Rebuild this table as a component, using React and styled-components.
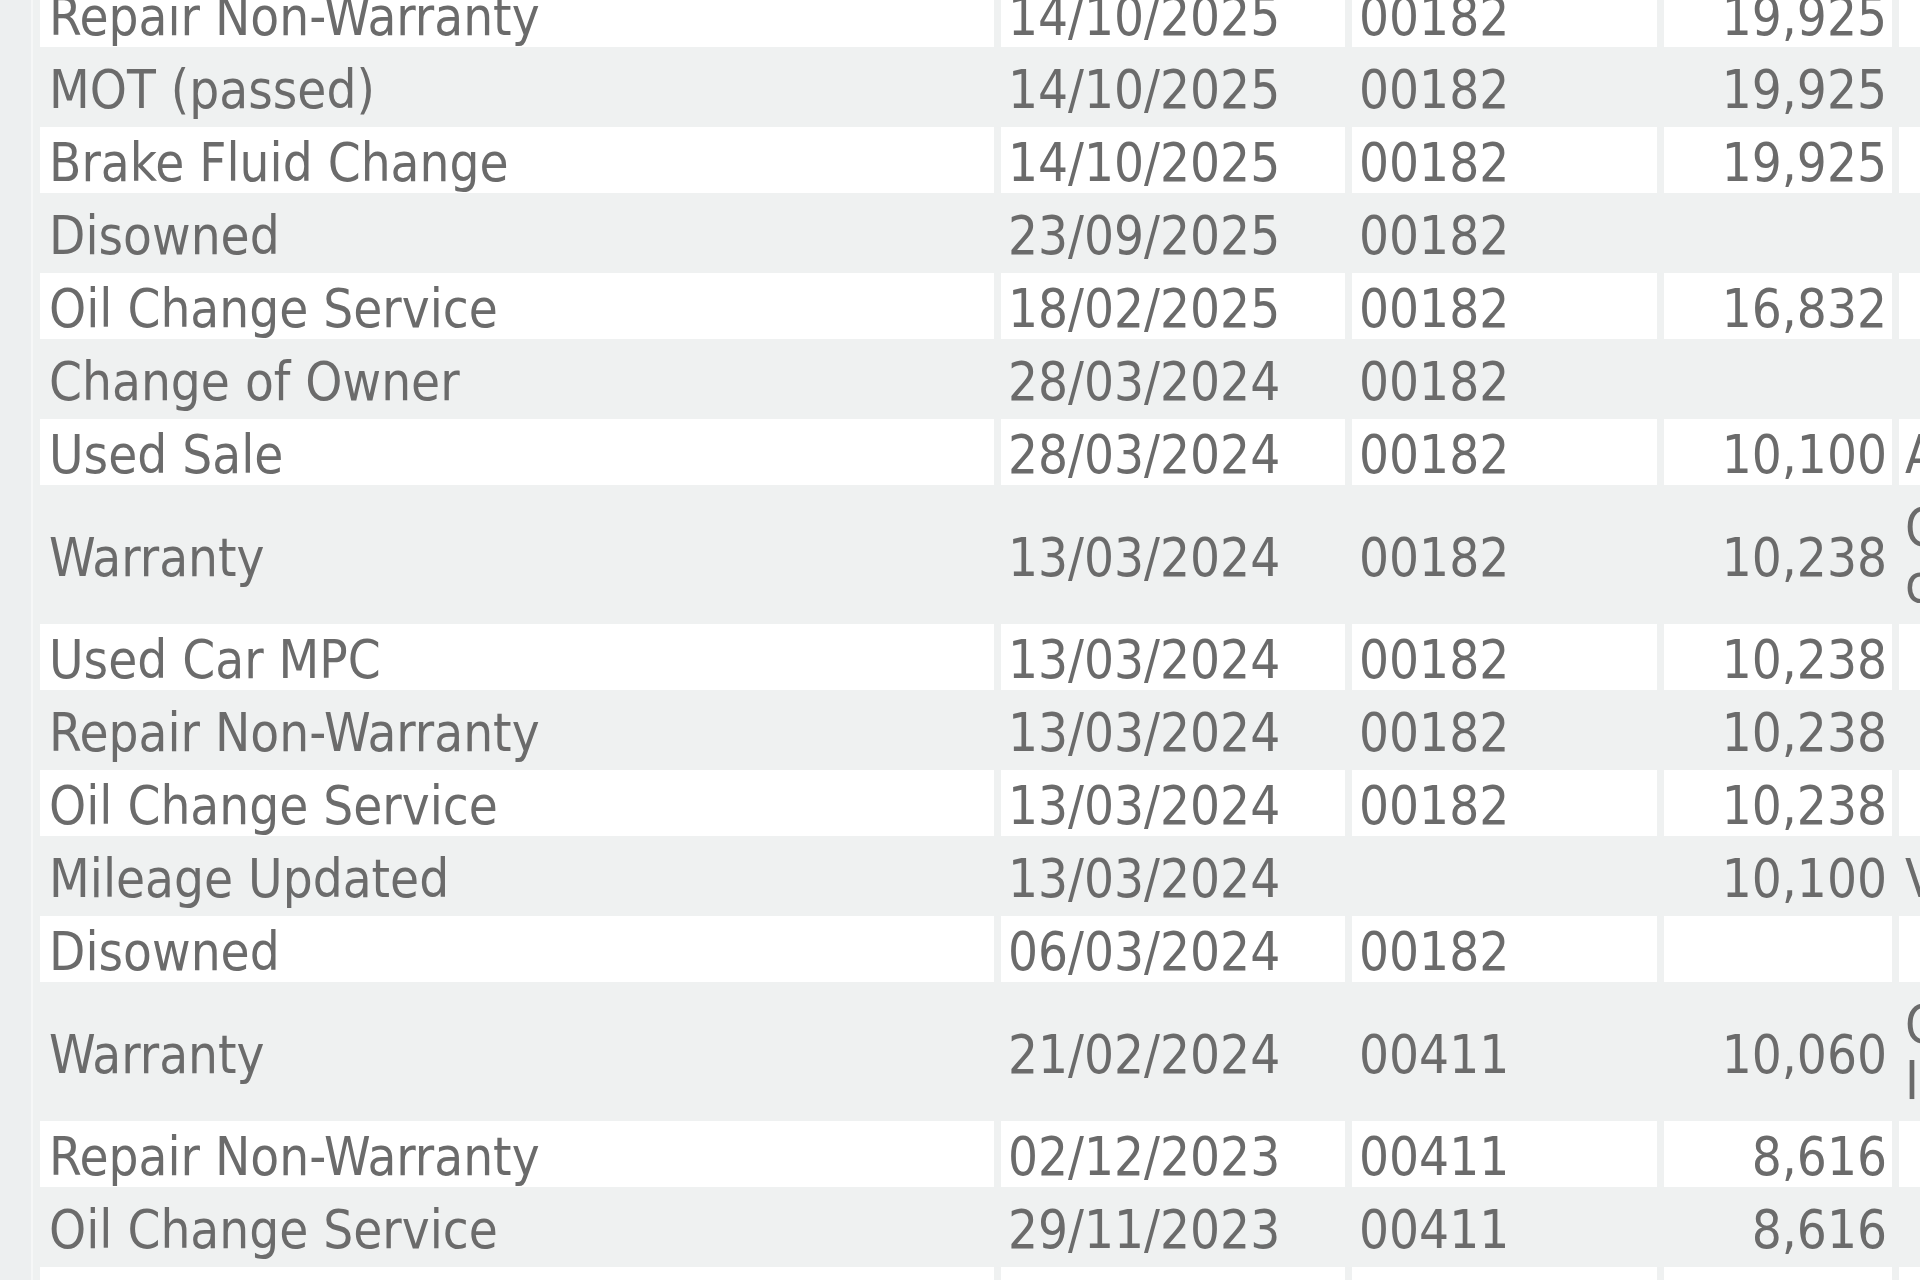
import styled, { createGlobalStyle } from "styled-components";

const GlobalStyle = createGlobalStyle`
  html, body {
    margin: 0;
    padding: 0;
    background: #eef0f0;
    overflow: hidden;
  }
`;

const Page = styled.div`
  width: 1920px;
  height: 1280px;
  overflow: hidden;
  display: flex;
`;

const Gutter = styled.div`
  width: 31px;
  flex: none;
  background: #edeff0;
  border-right: 2px solid #f6f7f7;
`;

const Panel = styled.div`
  margin-top: -26px;
  flex: none;
`;

const Table = styled.table`
  table-layout: fixed;
  width: 2373px;
  border-collapse: separate;
  border-spacing: 7px;
  background: #eff1f1;
  font-family: "DejaVu Sans Condensed", "DejaVu Sans", sans-serif;
  font-stretch: condensed;
  font-size: 52.5px;
  color: #6b6b6b;
`;

const Row = styled.tr`
  td {
    background: ${(p) => (p.$odd ? "#eff1f1" : "#ffffff")};
  }
`;

const Cell = styled.td`
  box-sizing: border-box;
  height: 66px;
  padding: 8px ${(p) => (p.$right ? "5px" : "7px")} 2px ${(p) => (p.$first ? "9px" : "7px")};
  line-height: 56px;
  vertical-align: middle;
  text-align: ${(p) => (p.$right ? "right" : "left")};
  white-space: nowrap;
  overflow: hidden;
`;

const Note = styled(Cell)`
  padding-left: 6px;
  padding-bottom: ${(p) => (p.$multi ? "5px" : "2px")};
`;

const rows = [
  ["Repair Non-Warranty", "14/10/2025", "00182", "19,925", ""],
  ["MOT (passed)", "14/10/2025", "00182", "19,925", ""],
  ["Brake Fluid Change", "14/10/2025", "00182", "19,925", ""],
  ["Disowned", "23/09/2025", "00182", "", ""],
  ["Oil Change Service", "18/02/2025", "00182", "16,832", ""],
  ["Change of Owner", "28/03/2024", "00182", "", ""],
  ["Used Sale", "28/03/2024", "00182", "10,100", "Advertised retail"],
  ["Warranty", "13/03/2024", "00182", "10,238", ["Customer states", "coolant light on"]],
  ["Used Car MPC", "13/03/2024", "00182", "10,238", ""],
  ["Repair Non-Warranty", "13/03/2024", "00182", "10,238", ""],
  ["Oil Change Service", "13/03/2024", "00182", "10,238", ""],
  ["Mileage Updated", "13/03/2024", "", "10,100", "Vehicle check"],
  ["Disowned", "06/03/2024", "00182", "", ""],
  ["Warranty", "21/02/2024", "00411", "10,060", ["Customer reports", "Intermittent fault"]],
  ["Repair Non-Warranty", "02/12/2023", "00411", "8,616", ""],
  ["Oil Change Service", "29/11/2023", "00411", "8,616", ""],
  ["MOT (passed)", "20/11/2023", "00411", "8,540", ""],
];

const App = () => {
  return (
    <>
      <GlobalStyle />
      <Page>
        <Gutter />
        <Panel>
          <Table>
            <colgroup>
              <col style={{ width: 954 }} />
              <col style={{ width: 344 }} />
              <col style={{ width: 305 }} />
              <col style={{ width: 228 }} />
              <col style={{ width: 500 }} />
            </colgroup>
            <tbody>
              {rows.map(([type, date, branch, miles, note], i) => {
                const multi = Array.isArray(note);
                return (
                  <Row key={i} $odd={i % 2 === 1}>
                    <Cell $first>{type}</Cell>
                    <Cell>{date}</Cell>
                    <Cell>{branch}</Cell>
                    <Cell $right>{miles}</Cell>
                    <Note $multi={multi}>
                      {multi ? note.map((line, j) => <div key={j}>{line}</div>) : note}
                    </Note>
                  </Row>
                );
              })}
            </tbody>
          </Table>
        </Panel>
      </Page>
    </>
  );
};

export default App;
